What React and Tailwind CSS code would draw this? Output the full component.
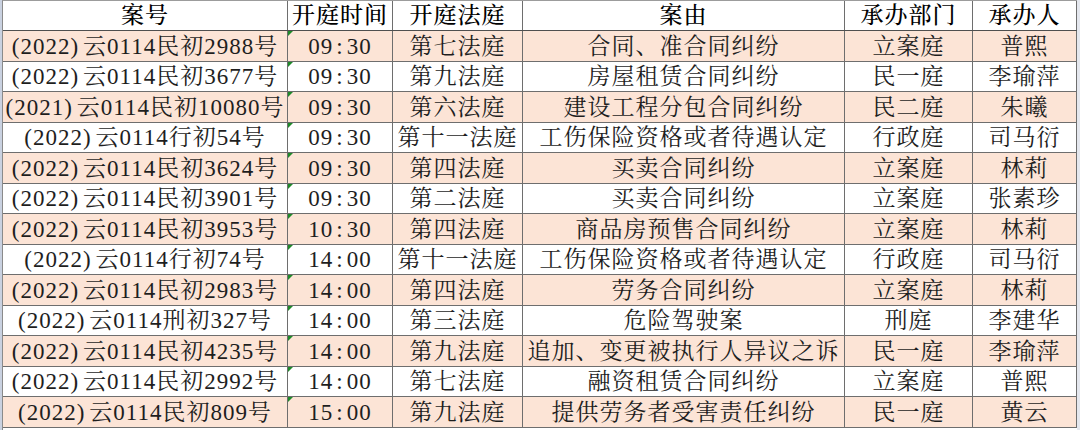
import React from "react";

const rows = [
  ["(2022)", "云0114民初2988号", "09", "30", "第七法庭", "合同、准合同纠纷", "立案庭", "普熙"],
  ["(2022)", "云0114民初3677号", "09", "30", "第九法庭", "房屋租赁合同纠纷", "民一庭", "李瑜萍"],
  ["(2021)", "云0114民初10080号", "09", "30", "第六法庭", "建设工程分包合同纠纷", "民二庭", "朱曦"],
  ["(2022)", "云0114行初54号", "09", "30", "第十一法庭", "工伤保险资格或者待遇认定", "行政庭", "司马衍"],
  ["(2022)", "云0114民初3624号", "09", "30", "第四法庭", "买卖合同纠纷", "立案庭", "林莉"],
  ["(2022)", "云0114民初3901号", "09", "30", "第二法庭", "买卖合同纠纷", "立案庭", "张素珍"],
  ["(2022)", "云0114民初3953号", "10", "30", "第四法庭", "商品房预售合同纠纷", "立案庭", "林莉"],
  ["(2022)", "云0114行初74号", "14", "00", "第十一法庭", "工伤保险资格或者待遇认定", "行政庭", "司马衍"],
  ["(2022)", "云0114民初2983号", "14", "00", "第四法庭", "劳务合同纠纷", "立案庭", "林莉"],
  ["(2022)", "云0114刑初327号", "14", "00", "第三法庭", "危险驾驶案", "刑庭", "李建华"],
  ["(2022)", "云0114民初4235号", "14", "00", "第九法庭", "追加、变更被执行人异议之诉", "民一庭", "李瑜萍"],
  ["(2022)", "云0114民初2992号", "14", "00", "第七法庭", "融资租赁合同纠纷", "立案庭", "普熙"],
  ["(2022)", "云0114民初809号", "15", "00", "第九法庭", "提供劳务者受害责任纠纷", "民一庭", "黄云"],
];

const font = {
  fontFamily:
    '"Liberation Serif", "Noto Serif CJK SC", "Noto Sans CJK SC", serif',
};

const cell =
  "flex items-center justify-center border-r border-[#6e6e6e] whitespace-nowrap pt-[2px]";

export default function App() {
  return (
    <div
      className="w-[1080px] h-[430px] bg-[#dfe3ea] flex overflow-hidden"
      style={font}
    >
      <div className="w-[2px] shrink-0 bg-[#c9d1e0]" />
      <div className="w-[1075px] shrink-0 flex flex-col bg-white border-t border-[#9c9c9c] border-l border-l-[#8a8a8a]">
        {/* header */}
        <div className="flex h-[30px] shrink-0 border-b border-[#4f4f4f] text-[23px] tracking-[1px] text-black font-medium">
          <div className={`${cell} w-[285px]`}>案号</div>
          <div className={`${cell} w-[105px]`}>开庭时间</div>
          <div className={`${cell} w-[130px]`}>开庭法庭</div>
          <div className={`${cell} w-[322px]`}>案由</div>
          <div className={`${cell} w-[128px]`}>承办部门</div>
          <div className={`${cell} w-[104px]`}>承办人</div>
        </div>
        {rows.map((r, i) => (
          <div
            key={i}
            className={`flex h-[30.5px] shrink-0 border-b border-[#6e6e6e] text-[23px] tracking-[1px] text-[#1e1e1e] ${
              i % 2 === 0 ? "bg-[#fce4d6]" : "bg-white"
            }`}
          >
            <div className={`${cell} w-[285px]`}>
              <span>{r[0]}</span>
              <span className="ml-[4px]">{r[1]}</span>
            </div>
            <div className={`${cell} w-[105px] relative`}>
              <span className="absolute left-0 top-0 w-0 h-0 border-t-[5px] border-t-[#1f8a2a] border-r-[5px] border-r-transparent" />
              <span>{r[2]}</span>
              <span className="mx-[3px]">:</span>
              <span>{r[3]}</span>
            </div>
            <div className={`${cell} w-[130px]`}>{r[4]}</div>
            <div className={`${cell} w-[322px]`}>{r[5]}</div>
            <div className={`${cell} w-[128px]`}>{r[6]}</div>
            <div className={`${cell} w-[104px]`}>{r[7]}</div>
          </div>
        ))}
      </div>
      <div className="w-[3px] shrink-0 bg-[#e4e7ee]" />
    </div>
  );
}
